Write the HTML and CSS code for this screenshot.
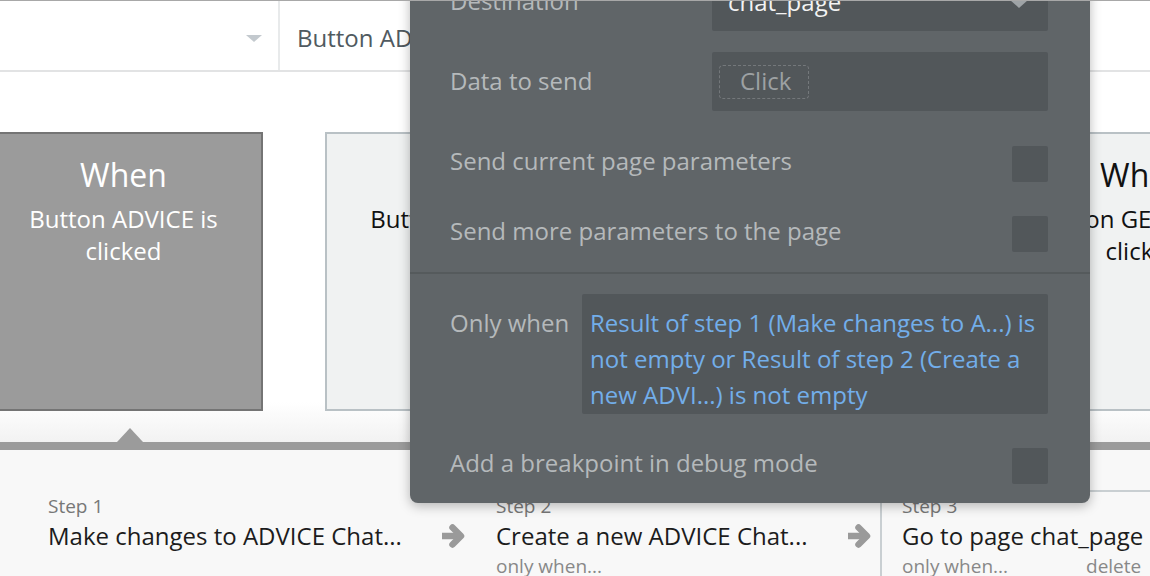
FILE: index.html
```html
<!DOCTYPE html>
<html>
<head>
<meta charset="utf-8">
<link rel="stylesheet" href="styles.css">
</head>
<body>
<div class="page">
  <header class="topbar">
    <div class="dd"><span class="caret"></span></div>
    <div class="tab">Button ADVICE is clicked</div>
  </header>

  <section class="canvas">
    <div class="card card-active">
      <div class="card-title">When</div>
      <div class="card-text">Button ADVICE is clicked</div>
    </div>
    <div class="card">
      <div class="card-title">When</div>
      <div class="card-text">Button ADVICE is clicked</div>
    </div>
    <div class="card">
      <div class="card-title">When</div>
      <div class="card-text">Button CHAT is clicked</div>
    </div>
    <div class="card card-far">
      <div class="card-title">When</div>
      <div class="card-text">Button GENERAL is clicked</div>
    </div>
  </section>

  <div class="rail"><span class="pointer"></span></div>

  <section class="steps">
    <div class="step step-1">
      <div class="step-label">Step 1</div>
      <div class="step-title">Make changes to ADVICE Chat...</div>
    </div>
    <svg class="arrow arrow-1" width="26" height="26" viewBox="0 0 26 26"><path d="M2 13 H19" stroke="#9a9a9a" stroke-width="6.5" fill="none"/><path d="M12.5 4.5 L21 13 L12.5 21.5" stroke="#9a9a9a" stroke-width="6.5" fill="none" stroke-linecap="round" stroke-linejoin="round"/></svg>
    <div class="step step-2">
      <div class="step-label">Step 2</div>
      <div class="step-title">Create a new ADVICE Chat...</div>
      <div class="step-meta">only when...</div>
    </div>
    <svg class="arrow arrow-2" width="26" height="26" viewBox="0 0 26 26"><path d="M2 13 H19" stroke="#9a9a9a" stroke-width="6.5" fill="none"/><path d="M12.5 4.5 L21 13 L12.5 21.5" stroke="#9a9a9a" stroke-width="6.5" fill="none" stroke-linecap="round" stroke-linejoin="round"/></svg>
    <div class="step step-3">
      <div class="step-label">Step 3</div>
      <div class="step-title">Go to page chat_page</div>
      <div class="step-meta-row"><span class="step-meta">only when...</span><span class="step-meta">delete</span></div>
    </div>
  </section>

  <div class="popup">
    <div class="prop prop-field">
      <div class="prop-label">Destination</div>
      <div class="field field-select"><span class="field-value">chat_page</span><span class="field-caret"></span></div>
    </div>
    <div class="prop prop-field">
      <div class="prop-label">Data to send</div>
      <div class="field"><span class="click-chip">Click</span></div>
    </div>
    <div class="prop prop-check">
      <div class="prop-label">Send current page parameters</div>
      <div class="checkbox"></div>
    </div>
    <div class="prop prop-check prop-last">
      <div class="prop-label">Send more parameters to the page</div>
      <div class="checkbox"></div>
    </div>
    <div class="divider"></div>
    <div class="prop prop-cond">
      <div class="prop-label cond-label">Only when</div>
      <div class="cond-box">Result of step 1 (Make changes to A...) is not empty or Result of step 2 (Create a new ADVI...) is not empty</div>
    </div>
    <div class="prop prop-check">
      <div class="prop-label">Add a breakpoint in debug mode</div>
      <div class="checkbox"></div>
    </div>
  </div>
</div>
</body>
</html>
```

FILE: styles.css
```css
* { box-sizing: border-box; }
html, body { margin: 0; padding: 0; }
body {
  font-family: "Open Sans", "DejaVu Sans", sans-serif;
  background: #fff;
}
.page {
  position: relative;
  width: 1150px;
  height: 576px;
  overflow: hidden;
}
.page::before {
  content: "";
  position: absolute;
  left: 0; top: 0; right: 0;
  height: 1px;
  background: #a8a8a8;
  z-index: 10;
}

/* top bar */
.topbar {
  display: flex;
  height: 72px;
  border-bottom: 2px solid #e2e3e4;
  background: #fff;
}
.dd {
  width: 280px;
  border-right: 2px solid #e8eaeb;
  display: flex;
  justify-content: flex-end;
  align-items: center;
  padding-right: 16px;
}
.caret {
  width: 0; height: 0;
  border-left: 8px solid transparent;
  border-right: 8px solid transparent;
  border-top: 7px solid #c3c9ce;
  margin-top: 6px;
}
.tab {
  padding: 4px 0 0 17px;
  display: flex;
  align-items: center;
  font-size: 24px;
  color: #505a60;
  white-space: nowrap;
}

/* canvas */
.canvas {
  height: 370px;
  display: flex;
  gap: 62px;
  padding-top: 60px;
  background: linear-gradient(to bottom, #fff 0, #fff 330px, #f2f2f2 370px);
}
.card {
  flex: 0 0 279px;
  height: 279px;
  border: 2px solid #b9c1c5;
  background: #f0f2f2;
  color: #111;
  text-align: center;
  padding: 21px 20px 0;
}
.card-active {
  margin-left: -16px;
  background: #9b9b9b;
  border-color: #747474;
  color: #fff;
}
.card-far { margin-left: -3px; }
.card-title {
  font-size: 32px;
  line-height: 40px;
  margin-bottom: 8px;
}
.card-text {
  font-size: 24px;
  line-height: 32px;
}

/* rail */
.rail {
  position: relative;
  height: 8px;
  background: #9b9b9b;
}
.pointer {
  position: absolute;
  left: 117px;
  top: -14px;
  width: 0; height: 0;
  border-left: 13px solid transparent;
  border-right: 13px solid transparent;
  border-bottom: 14px solid #9b9b9b;
}

/* steps */
.steps {
  height: 126px;
  background: #f8f8f8;
  display: flex;
  align-items: stretch;
  padding: 40px 0 0 48px;
}
.step { padding-top: 2px; }
.step-1 { width: 392px; }
.step-2 { width: 350px; }
.arrow { flex: 0 0 26px; margin-top: 33px; }
.arrow-1 { margin-right: 30px; }
.arrow-2 { margin-right: 8px; }
.step-3 {
  flex: 1;
  border-top: 2px solid #c9cfd2;
  border-left: 2px solid #c9cfd2;
  padding: 0 0 0 20px;
}
.step-label {
  font-size: 19px;
  line-height: 28px;
  color: #777;
}
.step-title {
  font-size: 24px;
  line-height: 32px;
  color: #1c1c1c;
  white-space: nowrap;
}
.step-meta {
  font-size: 19px;
  line-height: 28px;
  color: #888;
  white-space: nowrap;
}
.step-meta-row {
  display: flex;
  gap: 78px;
}

/* popup */
.popup {
  position: absolute;
  left: 410px;
  top: -50px;
  width: 680px;
  background: #606568;
  border-radius: 8px;
  box-shadow: 0 3px 12px rgba(0,0,0,0.28);
  padding: 22px 42px 19px 40px;
  z-index: 5;
}
.prop {
  display: flex;
  align-items: center;
  justify-content: space-between;
}
.prop-label {
  font-size: 24px;
  line-height: 32px;
  color: #b5b9bb;
  white-space: nowrap;
}
.prop-field .prop-label { margin-top: -2px; }
.prop-check .prop-label { margin-top: -6px; }
.prop-field { height: 59px; margin-bottom: 21px; }
.prop-field + .prop-field { margin-bottom: 35px; }
.prop-check { height: 36px; margin-bottom: 34px; }
.prop-last { margin-bottom: 20px; }
.prop-check:last-child { margin-bottom: 0; }
.field {
  width: 336px;
  height: 59px;
  background: #52575a;
  border-radius: 2px;
  display: flex;
  align-items: center;
  padding: 0 20px 0 16px;
}
.field-select { justify-content: space-between; }
.field-value {
  font-size: 24px;
  color: #f3f3f3;
}
.field-caret {
  width: 0; height: 0;
  border-left: 9px solid transparent;
  border-right: 9px solid transparent;
  border-top: 8px solid #9ea3a6;
  margin-top: 4px;
}
.click-chip {
  margin-left: -9px;
  width: 90px;
  height: 34px;
  border: 1.5px dashed #74787b;
  border-radius: 4px;
  font-size: 24px;
  line-height: 30px;
  color: #9da1a3;
  padding-left: 20px;
}
.checkbox {
  width: 36px;
  height: 36px;
  background: #52575a;
  border-radius: 2px;
}
.divider {
  height: 2px;
  background: #555a5c;
  margin: 0 -42px 20px -40px;
}
.prop-cond {
  align-items: flex-start;
  margin-bottom: 34px;
}
.cond-label {
  line-height: 36px;
  padding-top: 11px;
}
.cond-box {
  width: 466px;
  height: 120px;
  background: #52575a;
  border-radius: 2px;
  padding: 11px 8px 0 8px;
  font-size: 24px;
  line-height: 36px;
  color: #72aeea;
}
```
